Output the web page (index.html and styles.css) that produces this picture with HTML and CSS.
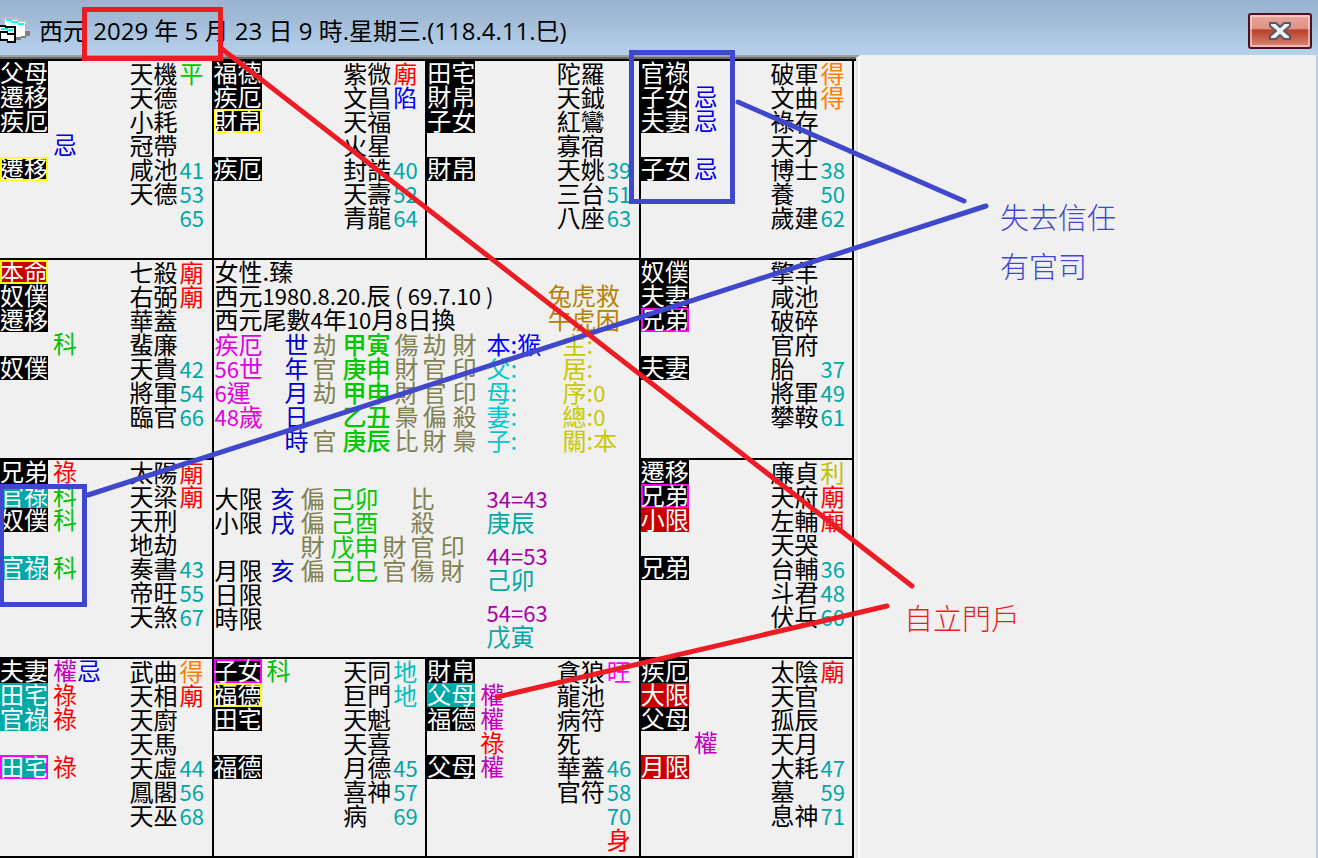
FILE: index.html
```html
<!DOCTYPE html>
<html lang="zh-TW">
<head>
    <meta charset="UTF-8">
    <meta name="viewport" content="width=device-width, initial-scale=1.0">
    <title>流時命盤</title>
    <link rel="stylesheet" href="styles.css">
</head>
<body>

<header class="title-bar">
    <svg class="app-icon" width="32" height="28" viewBox="0 0 32 28" shape-rendering="crispEdges" aria-hidden="true">
        <path d="M16 20h5v-2h4v-4h5v5h-4v2h-5v2h-5z" fill="#808080"/>
        <path d="M5 1h7v2h6v2h7v14h-4v1h-16z" fill="#fff"/>
        <path d="M4 8V1h8v1h6v2h8v3" fill="none" stroke="#c0c0c0" stroke-width="2"/>
        <path d="M6 3h6M11 5h7M18 7h6" stroke="#00ffff" stroke-width="2"/>
        <path d="M0 8h6v2h10v16H8v-3H0z" fill="#fff"/>
        <path d="M0 9h6M5 10h11M15 10v16M0 15h8M7 17h8M0 23h8M7 25h9M0 15v8" fill="none" stroke="#000" stroke-width="2"/>
        <path d="M1 12h7M7 13h6" stroke="#00ffff" stroke-width="2"/>
    </svg>
    <h1>西元 2029 年 5 月 23 日 9 時.星期三.(118.4.11.巳)</h1>
    <button class="close" type="button" aria-label="關閉">
        <svg width="24" height="20" viewBox="0 0 24 20" aria-hidden="true">
            <path d="M2 2h6l4 4 4-4h6v3l-6 5 6 5v3h-6l-4-4-4 4H2v-3l6-5-6-5z" fill="#eeeeea" stroke="#555868" stroke-width="2" stroke-linejoin="round"/>
        </svg>
    </button>
</header>

<main class="client">
    <div class="frame">
        <div class="board">

            <!-- 巳 午 未 申 -->
            <section class="palace">
                <ul class="tags">
                    <li><span class="tag">父母</span></li>
                    <li><span class="tag">遷移</span></li>
                    <li><span class="tag">疾厄</span></li>
                    <li><span class="gap"></span><span class="ji">忌</span></li>
                    <li><span class="tag yellow">遷移</span></li>
                </ul>
                <ul class="stars">
                    <li><span>天機</span><b class="ping">平</b></li>
                    <li><span>天德</span></li>
                    <li><span>小耗</span></li>
                    <li><span>冠帶</span></li>
                    <li><span>咸池</span><b class="age">41</b></li>
                    <li><span>天德</span><b class="age">53</b></li>
                    <li><span></span><b class="age">65</b></li>
                </ul>
            </section>

            <section class="palace">
                <ul class="tags">
                    <li><span class="tag">福德</span></li>
                    <li><span class="tag">疾厄</span></li>
                    <li><span class="tag yellow">財帛</span></li>
                    <li></li>
                    <li><span class="tag">疾厄</span></li>
                </ul>
                <ul class="stars">
                    <li><span>紫微</span><b class="miao">廟</b></li>
                    <li><span>文昌</span><b class="xian">陷</b></li>
                    <li><span>天福</span></li>
                    <li><span>火星</span></li>
                    <li><span>封誥</span><b class="age">40</b></li>
                    <li><span>天壽</span><b class="age">52</b></li>
                    <li><span>青龍</span><b class="age">64</b></li>
                </ul>
            </section>

            <section class="palace">
                <ul class="tags">
                    <li><span class="tag">田宅</span></li>
                    <li><span class="tag">財帛</span></li>
                    <li><span class="tag">子女</span></li>
                    <li></li>
                    <li><span class="tag">財帛</span></li>
                </ul>
                <ul class="stars">
                    <li><span>陀羅</span></li>
                    <li><span>天鉞</span></li>
                    <li><span>紅鸞</span></li>
                    <li><span>寡宿</span></li>
                    <li><span>天姚</span><b class="age">39</b></li>
                    <li><span>三台</span><b class="age">51</b></li>
                    <li><span>八座</span><b class="age">63</b></li>
                </ul>
            </section>

            <section class="palace">
                <ul class="tags">
                    <li><span class="tag">官祿</span></li>
                    <li><span class="tag">子女</span><span class="ji">忌</span></li>
                    <li><span class="tag">夫妻</span><span class="ji">忌</span></li>
                    <li></li>
                    <li><span class="tag">子女</span><span class="ji">忌</span></li>
                </ul>
                <ul class="stars">
                    <li><span>破軍</span><b class="de">得</b></li>
                    <li><span>文曲</span><b class="de">得</b></li>
                    <li><span>祿存</span></li>
                    <li><span>天才</span></li>
                    <li><span>博士</span><b class="age">38</b></li>
                    <li><span>養</span><b class="age">50</b></li>
                    <li><span>歲建</span><b class="age">62</b></li>
                </ul>
            </section>

            <!-- 辰 / 中宮 / 酉 -->
            <section class="palace">
                <ul class="tags">
                    <li><span class="tag red yellow">本命</span></li>
                    <li><span class="tag">奴僕</span></li>
                    <li><span class="tag">遷移</span></li>
                    <li><span class="gap"></span><span class="ke">科</span></li>
                    <li><span class="tag">奴僕</span></li>
                </ul>
                <ul class="stars">
                    <li><span>七殺</span><b class="miao">廟</b></li>
                    <li><span>右弼</span><b class="miao">廟</b></li>
                    <li><span>華蓋</span></li>
                    <li><span>蜚廉</span></li>
                    <li><span>天貴</span><b class="age">42</b></li>
                    <li><span>將軍</span><b class="age">54</b></li>
                    <li><span>臨官</span><b class="age">66</b></li>
                </ul>
            </section>

            <section class="center">
                <div class="person">
                    <div>
                        <p>女性.臻</p>
                        <p>西元<span class="num">1980.8.20.</span>辰<span class="num"> ( 69.7.10 )</span></p>
                        <p>西元尾數<span class="num">4</span>年<span class="num">10</span>月<span class="num">8</span>日換</p>
                    </div>
                    <div class="zodiac">
                        <p>兔虎救</p>
                        <p>牛虎困</p>
                    </div>
                </div>

                <table class="pillars">
                    <colgroup>
                        <col class="w70"><col class="w28"><col class="w30"><col class="w52"><col class="w28"><col class="w30"><col class="w34"><col class="w76"><col>
                    </colgroup>
                    <tr><td class="luck">疾厄</td><td class="blue">世</td><td class="god">劫</td><td class="stem">甲寅</td><td class="god">傷</td><td class="god">劫</td><td class="god">財</td><td class="self">本:猴</td><td class="sum">主:</td></tr>
                    <tr><td class="luck"><span class="num">56</span>世</td><td class="blue">年</td><td class="god">官</td><td class="stem">庚申</td><td class="god">財</td><td class="god">官</td><td class="god">印</td><td class="kin">父:</td><td class="sum">居:</td></tr>
                    <tr><td class="luck"><span class="num">6</span>運</td><td class="blue">月</td><td class="god">劫</td><td class="stem">甲申</td><td class="god">財</td><td class="god">官</td><td class="god">印</td><td class="kin">母:</td><td class="sum">序:<span class="num">0</span></td></tr>
                    <tr><td class="luck"><span class="num">48</span>歲</td><td class="blue">日</td><td></td><td class="stem">乙丑</td><td class="god">梟</td><td class="god">偏</td><td class="god">殺</td><td class="kin">妻:</td><td class="sum">總:<span class="num">0</span></td></tr>
                    <tr><td></td><td class="blue">時</td><td class="god">官</td><td class="stem">庚辰</td><td class="god">比</td><td class="god">財</td><td class="god">梟</td><td class="kin">子:</td><td class="sum">關:本</td></tr>
                </table>

                <div class="limits">
                    <table>
                        <colgroup>
                            <col class="w56"><col class="w30"><col class="w30"><col class="w52"><col class="w28"><col class="w30"><col class="w46">
                        </colgroup>
                        <tr><td>大限</td><td class="blue">亥</td><td class="god">偏</td><td class="stem">己卯</td><td></td><td class="god">比</td><td></td></tr>
                        <tr><td>小限</td><td class="blue">戌</td><td class="god">偏</td><td class="stem">己酉</td><td></td><td class="god">殺</td><td></td></tr>
                        <tr><td></td><td></td><td class="god">財</td><td class="stem">戊申</td><td class="god">財</td><td class="god">官</td><td class="god">印</td></tr>
                        <tr><td>月限</td><td class="blue">亥</td><td class="god">偏</td><td class="stem">己巳</td><td class="god">官</td><td class="god">傷</td><td class="god">財</td></tr>
                        <tr><td>日限</td><td></td><td></td><td></td><td></td><td></td><td></td></tr>
                        <tr><td>時限</td><td></td><td></td><td></td><td></td><td></td><td></td></tr>
                    </table>
                    <dl class="decades">
                        <div><dt class="num">34=43</dt><dd>庚辰</dd></div>
                        <div><dt class="num">44=53</dt><dd>己卯</dd></div>
                        <div><dt class="num">54=63</dt><dd>戊寅</dd></div>
                    </dl>
                </div>
            </section>

            <section class="palace">
                <ul class="tags">
                    <li><span class="tag">奴僕</span></li>
                    <li><span class="tag">夫妻</span></li>
                    <li><span class="tag magenta">兄弟</span></li>
                    <li></li>
                    <li><span class="tag">夫妻</span></li>
                </ul>
                <ul class="stars">
                    <li><span>擎羊</span></li>
                    <li><span>咸池</span></li>
                    <li><span>破碎</span></li>
                    <li><span>官府</span></li>
                    <li><span>胎</span><b class="age">37</b></li>
                    <li><span>將軍</span><b class="age">49</b></li>
                    <li><span>攀鞍</span><b class="age">61</b></li>
                </ul>
            </section>

            <!-- 卯 / 戌 -->
            <section class="palace">
                <ul class="tags">
                    <li><span class="tag">兄弟</span><span class="lu">祿</span></li>
                    <li><span class="tag teal">官祿</span><span class="ke">科</span></li>
                    <li><span class="tag">奴僕</span><span class="ke">科</span></li>
                    <li></li>
                    <li><span class="tag teal">官祿</span><span class="ke">科</span></li>
                </ul>
                <ul class="stars">
                    <li><span>太陽</span><b class="miao">廟</b></li>
                    <li><span>天梁</span><b class="miao">廟</b></li>
                    <li><span>天刑</span></li>
                    <li><span>地劫</span></li>
                    <li><span>奏書</span><b class="age">43</b></li>
                    <li><span>帝旺</span><b class="age">55</b></li>
                    <li><span>天煞</span><b class="age">67</b></li>
                </ul>
            </section>

            <section class="palace">
                <ul class="tags">
                    <li><span class="tag">遷移</span></li>
                    <li><span class="tag magenta">兄弟</span></li>
                    <li><span class="tag red">小限</span></li>
                    <li></li>
                    <li><span class="tag">兄弟</span></li>
                </ul>
                <ul class="stars">
                    <li><span>廉貞</span><b class="li">利</b></li>
                    <li><span>天府</span><b class="miao">廟</b></li>
                    <li><span>左輔</span><b class="miao">廟</b></li>
                    <li><span>天哭</span></li>
                    <li><span>台輔</span><b class="age">36</b></li>
                    <li><span>斗君</span><b class="age">48</b></li>
                    <li><span>伏兵</span><b class="age">60</b></li>
                </ul>
            </section>

            <!-- 寅 丑 子 亥 -->
            <section class="palace">
                <ul class="tags">
                    <li><span class="tag">夫妻</span><span class="quan">權</span><span class="ji">忌</span></li>
                    <li><span class="tag teal">田宅</span><span class="lu">祿</span></li>
                    <li><span class="tag teal">官祿</span><span class="lu">祿</span></li>
                    <li></li>
                    <li><span class="tag teal magenta">田宅</span><span class="lu">祿</span></li>
                </ul>
                <ul class="stars">
                    <li><span>武曲</span><b class="de">得</b></li>
                    <li><span>天相</span><b class="miao">廟</b></li>
                    <li><span>天廚</span></li>
                    <li><span>天馬</span></li>
                    <li><span>天虛</span><b class="age">44</b></li>
                    <li><span>鳳閣</span><b class="age">56</b></li>
                    <li><span>天巫</span><b class="age">68</b></li>
                </ul>
            </section>

            <section class="palace">
                <ul class="tags">
                    <li><span class="tag magenta">子女</span><span class="ke">科</span></li>
                    <li><span class="tag yellow">福德</span></li>
                    <li><span class="tag">田宅</span></li>
                    <li></li>
                    <li><span class="tag">福德</span></li>
                </ul>
                <ul class="stars">
                    <li><span>天同</span><b class="di">地</b></li>
                    <li><span>巨門</span><b class="di">地</b></li>
                    <li><span>天魁</span></li>
                    <li><span>天喜</span></li>
                    <li><span>月德</span><b class="age">45</b></li>
                    <li><span>喜神</span><b class="age">57</b></li>
                    <li><span>病</span><b class="age">69</b></li>
                </ul>
            </section>

            <section class="palace">
                <ul class="tags">
                    <li><span class="tag">財帛</span></li>
                    <li><span class="tag teal">父母</span><span class="quan">權</span></li>
                    <li><span class="tag">福德</span><span class="quan">權</span></li>
                    <li><span class="gap"></span><span class="lu">祿</span></li>
                    <li><span class="tag">父母</span><span class="quan">權</span></li>
                </ul>
                <ul class="stars">
                    <li><span>貪狼</span><b class="wang">旺</b></li>
                    <li><span>龍池</span></li>
                    <li><span>病符</span></li>
                    <li><span>死</span></li>
                    <li><span>華蓋</span><b class="age">46</b></li>
                    <li><span>官符</span><b class="age">58</b></li>
                    <li><span></span><b class="age">70</b></li>
                    <li><span></span><b class="miao">身</b></li>
                </ul>
            </section>

            <section class="palace">
                <ul class="tags">
                    <li><span class="tag">疾厄</span></li>
                    <li><span class="tag red">大限</span></li>
                    <li><span class="tag">父母</span></li>
                    <li><span class="gap"></span><span class="quan">權</span></li>
                    <li><span class="tag red">月限</span></li>
                </ul>
                <ul class="stars">
                    <li><span>太陰</span><b class="miao">廟</b></li>
                    <li><span>天官</span></li>
                    <li><span>孤辰</span></li>
                    <li><span>天月</span></li>
                    <li><span>大耗</span><b class="age">47</b></li>
                    <li><span>墓</span><b class="age">59</b></li>
                    <li><span>息神</span><b class="age">71</b></li>
                </ul>
            </section>

        </div>
    </div>
</main>

<!-- 手繪標註 -->
<svg class="marks" width="1318" height="858" viewBox="0 0 1318 858" aria-hidden="true">
    <g fill="none" stroke="#3f48cc" stroke-width="5" stroke-linecap="round">
        <rect x="631.5" y="52.5" width="101" height="149"/>
        <rect x="1.5" y="486.5" width="83" height="118"/>
        <path d="M738 102L964 201M88 495L986 206"/>
    </g>
    <g fill="none" stroke="#ed1c24" stroke-width="5" stroke-linecap="round">
        <rect x="84.500" y="9.500" width="136" height="49"/>
        <path d="M222 49L912 586M497 697L887 606"/>
    </g>
</svg>
<p class="note note-blue">失去信任<br>有官司</p>
<p class="note note-red">自立門戶</p>

</body>
</html>
```
FILE: styles.css
```css
* {
    box-sizing: border-box;
}
body {
    margin: 0;
    min-height: 100vh;
    display: flex;
    flex-direction: column;
    position: relative;
    background-color: #f0f0f0;
    color: #000;
    font-family: "Noto Sans CJK TC", sans-serif;
    font-size: 24px;
    line-height: 24px;
}
p, ul, dl, dd {
    margin: 0;
    padding: 0;
}
ul {
    list-style: none;
}

/* 標題列 */
.title-bar {
    display: flex;
    align-items: center;
    height: 55px;
    padding: 6px 6px 0 0;
    background: linear-gradient(#9ab4d1, #a3bcd8 40%, #b8d1eb);
}
.title-bar h1 {
    margin: 0 auto 0 7px;
    font-family: "Open Sans", "Noto Sans CJK TC", sans-serif;
    font-size: 24px;
    font-weight: 400;
    white-space: nowrap;
}
.close {
    display: flex;
    align-items: center;
    justify-content: center;
    width: 64px;
    height: 36px;
    padding: 0;
    border: 2px solid #4a1220;
    border-radius: 3px;
    background: linear-gradient(#eaa79c, #de8f82 44%, #b8412a 46%, #c4563f 65%, #d98a78);
    box-shadow: inset 0 0 0 2px rgba(255, 225, 220, 0.6);
}

/* 命盤外框 */
.client {
    flex: 1;
    display: grid;
    grid-template-columns: 17fr 9fr;
    border-right: 2px solid #b8d1eb;
}
.frame {
    display: flex;
    border-top: 2px solid #a0a0a0;
    border-right: 2px solid #fff;
}
.board {
    flex: 1;
    display: grid;
    grid-template-columns: repeat(4, 1fr);
    grid-auto-rows: 1fr;
    margin-right: 2px;
    padding-right: 2px;
    border-top: 2px solid #696969;
    box-shadow: inset 0 2px #000, 2px 0 #e3e3e3;
    padding-top: 2px;
}
.palace {
    display: flex;
    justify-content: space-between;
    padding-right: 8px;
    border-right: 2px solid #000;
    border-bottom: 2px solid #000;
}

/* 宮位標籤與四化 */
.tags li {
    display: flex;
    height: 24px;
    line-height: 22px;
}
.tag, .gap {
    width: 48px;
    margin-right: 5px;
}
.tag {
    background-color: #000;
    color: #fff;
}
.tag.red {
    background-color: #c80000;
}
.tag.teal {
    background-color: #00a8a8;
}
.tag.yellow {
    box-shadow: inset 0 0 0 2px #ffff00;
}
.tag.magenta {
    box-shadow: inset 0 0 0 2px #ff00ff;
}
.ji {
    color: #0000e0;
}
.ke {
    color: #00c000;
}
.lu {
    color: #ff0000;
}
.quan {
    color: #c000c0;
}

/* 星曜 */
.stars li {
    display: flex;
    height: 24px;
}
.stars span {
    width: 50px;
}
.stars b {
    width: 24px;
    font-weight: 400;
}
.stars .age {
    color: #00a8a8;
    font-size: 22px;
}
.ping {
    color: #00c800;
}
.miao {
    color: #ff0000;
}
.xian {
    color: #0000ff;
}
.de {
    color: #ff8000;
}
.li {
    color: #c0c000;
}
.di {
    color: #00c0c0;
}
.wang {
    color: #ff00ff;
}

/* 中宮 */
.center {
    grid-column: 2 / 4;
    grid-row: 2 / 4;
    padding-left: 1px;
    border-right: 2px solid #000;
    border-bottom: 2px solid #000;
}
.num {
    font-size: 22px;
    white-space: pre;
}
.person {
    display: flex;
    justify-content: space-between;
    padding-right: 19px;
}
.person p {
    height: 24px;
    line-height: 22px;
    white-space: nowrap;
}
.zodiac {
    padding-top: 24px;
    color: #b88000;
}
table {
    border-collapse: collapse;
    table-layout: fixed;
}
td {
    height: 24px;
    padding: 0;
    white-space: nowrap;
}
.pillars {
    width: 100%;
}
.limits {
    display: flex;
    align-items: flex-start;
    margin-top: 34px;
}
.w28 {
    width: 28px;
}
.w30 {
    width: 30px;
}
.w34 {
    width: 34px;
}
.w46 {
    width: 46px;
}
.w52 {
    width: 52px;
}
.w56 {
    width: 56px;
}
.w70 {
    width: 70px;
}
.w76 {
    width: 76px;
}
.luck {
    color: #e000e0;
}
.blue {
    color: #0000c8;
}
.god {
    color: #808050;
}
.stem {
    color: #00c800;
}
.pillars .stem {
    font-weight: 500;
}
.self {
    color: #0000ff;
}
.kin {
    color: #00c8c8;
}
.sum {
    color: #c8c800;
}
.decades {
    display: flex;
    flex-direction: column;
    gap: 9px;
}
.decades dt {
    color: #a800a8;
}
.decades dd {
    color: #00a8a8;
}

/* 標註 */
.marks {
    position: absolute;
    top: 0;
    left: 0;
    pointer-events: none;
}
.note {
    position: absolute;
    font-size: 29px;
    font-weight: 300;
    line-height: 49px;
}
.note-blue {
    left: 1000px;
    top: 192px;
    color: #3f48cc;
}
.note-red {
    left: 904px;
    top: 593px;
    color: #ed1c24;
}
```
